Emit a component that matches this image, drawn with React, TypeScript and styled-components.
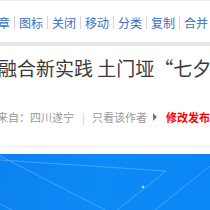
import React, { FC } from 'react';
import styled, { createGlobalStyle } from 'styled-components';

const GlobalStyle = createGlobalStyle`
  html, body {
    margin: 0;
    padding: 0;
    background: #fff;
    overflow: hidden;
  }
  body {
    font-family: "Noto Sans CJK SC", "Liberation Sans", sans-serif;
  }
`;

const Page = styled.div`
  width: 210px;
  height: 210px;
  overflow: hidden;
  background: #fff;
`;

const Toolbar = styled.div`
  display: flex;
  align-items: center;
  height: 42px;
  padding-top: 2px;
  box-sizing: border-box;
  border-top: 1px solid #eeeeee;
  margin-left: -14px;
  white-space: nowrap;
  font-size: 12px;
  line-height: 16px;
`;

const ToolLink = styled.span`
  color: #3a6fc8;
  flex: none;
`;

const ToolSep = styled.span`
  flex: none;
  width: 1px;
  height: 13px;
  margin: 0 4px;
  background: #d6d6d6;
`;

const Band = styled.div`
  height: 4px;
  background: #e6e6e6;
`;

const Title = styled.h1`
  margin: 8px 0 0 -2px;
  font-size: 19px;
  font-weight: normal;
  line-height: 28px;
  color: #3a3a3a;
  white-space: nowrap;
`;

const Meta = styled.div`
  display: flex;
  align-items: center;
  margin: 25px 0 0 -3px;
  height: 20px;
  font-size: 11px;
  color: #999;
  white-space: nowrap;
`;

const MetaSep = styled.span`
  margin: 0 7px 0 8px;
  color: #c8c8c8;
`;

const Arrow = styled.span`
  width: 0;
  height: 0;
  margin: 0 9px 0 6px;
  border-top: 4px solid transparent;
  border-bottom: 4px solid transparent;
  border-left: 4px solid #777;
`;

const EditLink = styled.span`
  color: #ff0000;
  font-weight: bold;
`;

const Divider = styled.div`
  margin-top: 19px;
  height: 1px;
  background: #eeeeee;
`;

const Banner = styled.div`
  margin-top: 7px;
  height: 60px;
  background: linear-gradient(100deg, #0b82f0 0%, #0e8af7 50%, #0b86f6 100%);
  overflow: hidden;
  svg {
    display: block;
  }
`;

const tools = ['文章', '图标', '关闭', '移动', '分类', '复制', '合并', '高亮'];

const App: FC = () => (
  <Page>
    <GlobalStyle />
    <Toolbar>
      {tools.map((t, i) => (
        <React.Fragment key={t}>
          {i > 0 && <ToolSep />}
          <ToolLink>{t}</ToolLink>
        </React.Fragment>
      ))}
    </Toolbar>
    <Band />
    <Title>融合新实践 土门垭“七夕”文化节</Title>
    <Meta>
      <span>来自：四川遂宁</span>
      <MetaSep>|</MetaSep>
      <span>只看该作者</span>
      <Arrow />
      <EditLink>修改发布</EditLink>
    </Meta>
    <Divider />
    <Banner>
      <svg width="210" height="60" viewBox="0 0 210 60">
        <g stroke="#6cbcff" strokeWidth="1" fill="none" opacity="0.55">
          <line x1="0" y1="2" x2="113" y2="60" />
          <line x1="0" y1="6" x2="166" y2="17" />
          <line x1="166" y1="17" x2="112" y2="60" />
          <line x1="210" y1="12" x2="150" y2="60" />
          <line x1="0" y1="50" x2="20" y2="60" />
        </g>
        <circle cx="143" cy="33" r="1.3" fill="#cfe8ff" opacity="0.8" />
      </svg>
    </Banner>
  </Page>
);

export default App;
